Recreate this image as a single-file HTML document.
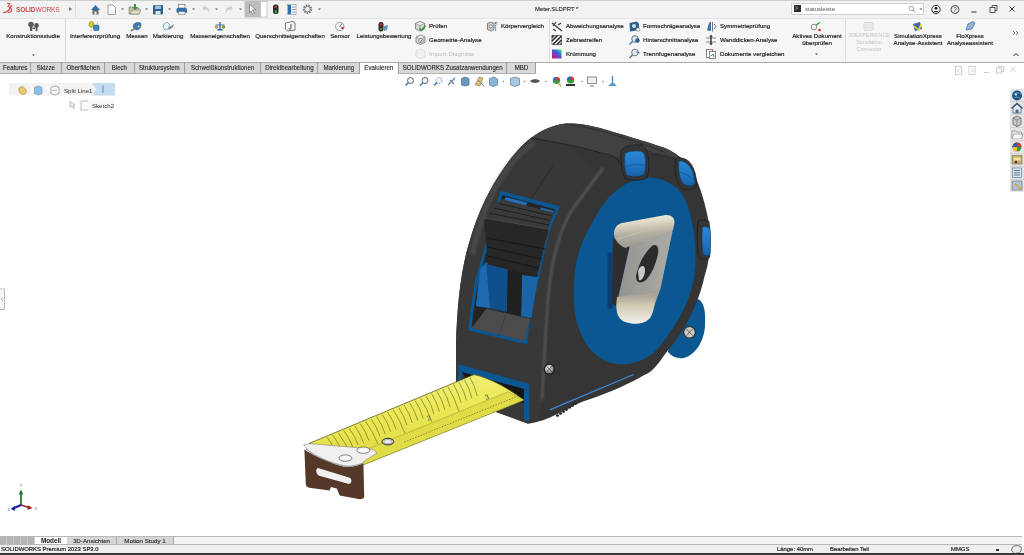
<!DOCTYPE html>
<html><head><meta charset="utf-8">
<style>
*{margin:0;padding:0;box-sizing:border-box}
html,body{width:1024px;height:555px;overflow:hidden;background:#fff;font-family:"Liberation Sans",sans-serif;color:#222}
.a{position:absolute;white-space:nowrap}
.t{position:absolute;white-space:nowrap;font-size:6.15px;line-height:7.2px;color:#161616;-webkit-text-stroke:0.16px #161616;will-change:transform}
#title{left:0;top:0;width:1024px;height:19px;background:#f2f2f2;border-top:1px solid #cfcfcf;border-bottom:1px solid #d8d8d8}
#ribbon{left:0;top:18px;width:1024px;height:44px;background:#f6f6f6;border-top:1px solid #e4e4e4}
#tabs{left:0;top:62px;width:1024px;height:12px;background:#fff;border-top:1px solid #a9a9a9}
.tab{position:absolute;top:0;height:11px;background:#d9d9d9;border-right:1px solid #9f9f9f;border-bottom:1px solid #b0b0b0;font-size:6.7px;line-height:10.5px;text-align:center;color:#1a1a1a;-webkit-text-stroke:0.1px #1a1a1a;will-change:transform}
.tab{display:flex;justify-content:center;white-space:nowrap}
.tab span{display:block;transform:scaleX(0.915);white-space:nowrap;flex:none}
.sep{position:absolute;width:1px;background:#dadada}
.dd{position:absolute;width:0;height:0;border-left:2px solid transparent;border-right:2px solid transparent;border-top:2px solid #444}
</style></head><body>

<!-- TITLE BAR -->
<div id="title" class="a"></div>
<div class="a" style="left:75px;top:1px;width:1px;height:17px;background:#e0e0e0"></div>
<!-- logo -->
<div class="a" style="left:16px;top:5.5px;font-size:6.6px;line-height:8px;color:#cc4a4c;letter-spacing:-0.15px;will-change:transform"><b>SOLID</b>WORKS</div>
<div class="a" style="left:69px;top:7px;width:0;height:0;border-top:2.5px solid transparent;border-bottom:2.5px solid transparent;border-left:3px solid #777"></div>

<div class="t" style="left:535px;top:5.5px;font-size:5.9px;-webkit-text-stroke:0.1px #222;color:#222">Meter.SLDPRT *</div>

<!-- search -->
<div class="a" style="left:791px;top:3px;width:133px;height:12px;background:#fff;border:1px solid #d0d0d0"></div>
<div class="a" style="left:794px;top:5px;width:7px;height:7px;background:#2b2b2b"></div>
<div class="t" style="left:805px;top:5.5px;font-size:6px;color:#555;-webkit-text-stroke:0">statusleiste</div>

<!-- RIBBON -->
<div id="ribbon" class="a"></div>
<div class="sep" style="left:65px;top:19px;height:42px"></div>
<div class="sep" style="left:549px;top:19px;height:42px"></div>
<div class="sep" style="left:845px;top:19px;height:42px"></div>

<div class="t" style="left:-16.60px;top:32px;width:100px;text-align:center">Konstruktionsstudie</div>
<div class="t" style="left:44.90px;top:32px;width:100px;text-align:center">Interferenzprüfung</div>
<div class="t" style="left:86.90px;top:32px;width:100px;text-align:center">Messen</div>
<div class="t" style="left:118.40px;top:32px;width:100px;text-align:center">Markierung</div>
<div class="t" style="left:169.75px;top:32px;width:100px;text-align:center">Masseneigenschaften</div>
<div class="t" style="left:240.40px;top:32px;width:100px;text-align:center">Querschnitteigenschaften</div>
<div class="t" style="left:290.30px;top:32px;width:100px;text-align:center">Sensor</div>
<div class="t" style="left:333.60px;top:32px;width:100px;text-align:center">Leistungsbewertung</div>

<div class="t" style="left:429px;top:22.3px">Prüfen</div>
<div class="t" style="left:429px;top:35.9px">Geometrie-Analyse</div>
<div class="t" style="left:429px;top:50.2px;color:#c6c6c6;-webkit-text-stroke:0.1px #c6c6c6">Import-Diagnose</div>
<div class="t" style="left:501px;top:22.3px">Körpervergleich</div>

<div class="t" style="left:566px;top:22.3px">Abweichungsanalyse</div>
<div class="t" style="left:566px;top:35.9px">Zebrastreifen</div>
<div class="t" style="left:566px;top:50.2px">Krümmung</div>
<div class="t" style="left:643px;top:22.3px">Formschrägeanalyse</div>
<div class="t" style="left:643px;top:35.9px">Hinterschnittanalyse</div>
<div class="t" style="left:643px;top:50.2px">Trennfugenanalyse</div>
<div class="t" style="left:720px;top:22.3px">Symmetrieprüfung</div>
<div class="t" style="left:720px;top:35.9px">Wanddicken-Analyse</div>
<div class="t" style="left:720px;top:50.2px">Dokumente vergleichen</div>

<div class="t" style="left:777.4px;top:32px;width:80px;text-align:center">Aktives Dokument<br>überprüfen</div>
<div class="t" style="left:828.5px;top:32px;width:80px;text-align:center;color:#c4c4c4;-webkit-text-stroke:0;font-size:5.45px;line-height:7.2px">3DEXPERIENCE<br>Simulation<br>Connector</div>
<div class="t" style="left:877.7px;top:32px;width:80px;text-align:center">SimulationXpress<br>Analyse-Assistent</div>
<div class="t" style="left:929.5px;top:32px;width:80px;text-align:center">FloXpress<br>Analyseassistent</div>

<!-- TABS -->
<div id="tabs" class="a"></div>
<div class="tab" style="left:0px;top:63px;width:31px"><span>Features</span></div>
<div class="tab" style="left:31px;top:63px;width:31px"><span>Skizze</span></div>
<div class="tab" style="left:62px;top:63px;width:43px"><span>Oberflächen</span></div>
<div class="tab" style="left:105px;top:63px;width:30px"><span>Blech</span></div>
<div class="tab" style="left:135px;top:63px;width:50px"><span>Struktursystem</span></div>
<div class="tab" style="left:185px;top:63px;width:76px"><span>Schweißkonstruktionen</span></div>
<div class="tab" style="left:261px;top:63px;width:57px"><span>Direktbearbeitung</span></div>
<div class="tab" style="left:318px;top:63px;width:42px"><span>Markierung</span></div>
<div class="tab" style="left:360px;top:63px;width:39px;background:#fff;border-bottom:none"><span>Evaluieren</span></div>
<div class="tab" style="left:399px;top:63px;width:108px"><span>SOLIDWORKS Zusatzanwendungen</span></div>
<div class="tab" style="left:507px;top:63px;width:29px"><span>MBD</span></div>


<!-- CHROME ICONS -->
<svg class="a" style="left:0;top:0" width="1024" height="320" viewBox="0 0 1024 320">
<!-- logo -->
<g fill="none" stroke="#cf4d4d" stroke-width="1.1" stroke-linejoin="round">
<path d="M7,3.5 L10,3.5 L8,6.5 C10,6.5 10.5,8.5 9,10 C7.5,11.5 5,12.5 3,12.8"/>
<path d="M12.5,6 C11,5.5 9.8,6.5 10.6,8 C11.4,9.5 12.5,10 11,11.5 C10,12.3 8.5,12.3 8,12"/>
</g>
<!-- title bar dropdown dots -->
<g fill="#555">
<path d="M121,8.5 h3 l-1.5,1.5z M145,8.5 h3 l-1.5,1.5z M168,8.5 h3 l-1.5,1.5z M192,8.5 h3 l-1.5,1.5z M215,8.5 h3 l-1.5,1.5z M239,8.5 h3 l-1.5,1.5z M262,8.5 h3 l-1.5,1.5z M318,8.5 h3 l-1.5,1.5z M919.5,8.5 h3 l-1.5,1.5z"/>
</g>
<!-- home -->
<path d="M91,10 L95.5,5 L100,10 Z" fill="#2f6fa8"/>
<rect x="92.5" y="10" width="6" height="4.5" fill="#6a6a6a"/>
<rect x="94.5" y="11.5" width="2" height="3" fill="#eee"/>
<!-- new doc -->
<path d="M108,5 L113,5 L115.5,7.5 L115.5,14.5 L108,14.5 Z" fill="#fafafa" stroke="#8a8a8a" stroke-width="0.8"/>
<!-- open -->
<path d="M129,7 L133,7 L134,8 L139,8 L139,14 L129,14 Z" fill="#c8c0a0" stroke="#777" stroke-width="0.6"/>
<path d="M130,14 L132,10 L141,10 L139,14 Z" fill="#e2dcc0" stroke="#777" stroke-width="0.6"/>
<path d="M134,4 L136,4 L136,7 L138,7 L135,10 L132,7 L134,7 Z" fill="#2a9a3a"/>
<!-- save -->
<rect x="153" y="5" width="10" height="9.5" rx="1" fill="#2b5f8e"/>
<rect x="155" y="5.5" width="6" height="3.5" fill="#9fc0dc"/>
<rect x="155.5" y="11" width="5" height="3.5" fill="#dfe8f0"/>
<!-- print -->
<rect x="178.5" y="4.5" width="6.5" height="3.5" fill="#fff" stroke="#555" stroke-width="0.6"/>
<rect x="176.5" y="8" width="10.5" height="5" rx="1.5" fill="#2f6fa8"/>
<rect x="178.5" y="11.5" width="6.5" height="3" fill="#eaeaea" stroke="#666" stroke-width="0.5"/>
<!-- undo redo -->
<path d="M202,8 L205,5.5 L205,7 C208,7 210,9 209,13 C208,10 207,9.5 205,9.5 L205,11 Z" fill="#cfcfcf"/>
<path d="M233,8 L230,5.5 L230,7 C227,7 225,9 226,13 C227,10 228,9.5 230,9.5 L230,11 Z" fill="#cfcfcf"/>
<!-- select -->
<rect x="244.5" y="1" width="16" height="16.5" fill="#bdbdbd"/>
<rect x="260.5" y="1.5" width="6.5" height="15.5" fill="#fff" stroke="#bdbdbd" stroke-width="0.8"/>
<path d="M249.5,4.5 L255.5,9.5 L252.5,10 L254.5,13.5 L252.5,14 L251,11 L249.5,13 Z" fill="#f4f4f4" stroke="#666" stroke-width="0.6"/>
<!-- traffic light -->
<rect x="273" y="4.5" width="5.5" height="9.5" rx="2.5" fill="#2a2a2a"/>
<circle cx="275.8" cy="7" r="1.2" fill="#d33"/>
<circle cx="275.8" cy="11.5" r="1.2" fill="#3c3"/>
<!-- list -->
<rect x="287.5" y="4.5" width="8.5" height="10" fill="#fff" stroke="#7a8a9a" stroke-width="0.6"/>
<rect x="288" y="5" width="3" height="9" fill="#2f6fa8"/>
<path d="M291.5,7 h4 M291.5,9.5 h4 M291.5,12 h4" stroke="#5b7ea8" stroke-width="0.8"/>
<!-- gear -->
<circle cx="307.5" cy="9.2" r="3.8" fill="none" stroke="#777" stroke-width="1.8" stroke-dasharray="1.6,1"/>
<circle cx="307.5" cy="9.2" r="2.8" fill="none" stroke="#777" stroke-width="0.9"/>
<!-- search etc -->
<circle cx="911.5" cy="8.5" r="2.3" fill="none" stroke="#8a8a8a" stroke-width="0.8"/>
<path d="M913,10 L915,12" stroke="#8a8a8a" stroke-width="0.9"/>
<path d="M795.5,6.5 L797.5,8 L795.5,9.5" stroke="#fff" stroke-width="0.6" fill="none"/>
<circle cx="936" cy="9.5" r="4.2" fill="#fff" stroke="#2a2a2a" stroke-width="1"/>
<circle cx="936" cy="8.2" r="1.5" fill="#2a2a2a"/>
<path d="M933,12.3 C934,10.5 938,10.5 939,12.3 Z" fill="#2a2a2a"/>
<circle cx="955" cy="9.5" r="4" fill="none" stroke="#333" stroke-width="0.9"/>
<text x="953.2" y="12" font-family="Liberation Sans" font-size="6.5" fill="#333">?</text>
<path d="M971.5,12 h5" stroke="#333" stroke-width="1"/>
<rect x="990" y="7.5" width="5" height="5" fill="none" stroke="#333" stroke-width="0.8"/>
<path d="M992,7.5 v-2 h5 v5 h-2" fill="none" stroke="#333" stroke-width="0.8"/>
<path d="M1009.5,6.5 L1014.5,11.5 M1014.5,6.5 L1009.5,11.5" stroke="#333" stroke-width="1"/>

<!-- RIBBON large icons -->
<!-- Konstruktionsstudie -->
<g fill="#5a5a5a">
<circle cx="31" cy="24.5" r="2.8"/><rect x="30" y="26" width="2.2" height="5"/>
<circle cx="36.5" cy="25.5" r="2.4"/><rect x="35.6" y="27" width="1.9" height="4"/>
<rect x="32.5" y="27.5" width="2.5" height="1.5"/>
</g>
<!-- Interferenz -->
<ellipse cx="91.5" cy="24.5" rx="2.6" ry="3" fill="#c8c83a" stroke="#8a8a20" stroke-width="0.5"/>
<rect x="93.5" y="25" width="5.5" height="5.5" rx="1" fill="#3c86b8" stroke="#2a5a80" stroke-width="0.5"/>
<circle cx="97.5" cy="23" r="0.6" fill="#e55"/><circle cx="91" cy="30" r="0.6" fill="#e55"/>
<!-- Messen -->
<path d="M133,25 C134,22 139,21 141,23 C142,25 141,29 138,30 C135,31 132,28 133,25 Z" fill="#3f79a8"/>
<circle cx="138.5" cy="26.5" r="1" fill="#e8d84a"/>
<path d="M131,31 L134,29" stroke="#7a5a30" stroke-width="1.5"/>
<!-- Markierung -->
<path d="M164,24 L167,22 L170,25 L168,29 L165,30 L163,27 Z" fill="#eef6fb" stroke="#5aa0d0" stroke-width="0.8"/>
<path d="M168,28 L174,24 L173,27 L169,30 Z" fill="#8a8a8a"/>
<!-- Masseneigenschaften -->
<path d="M220,22 v8" stroke="#2f6aa0" stroke-width="1.3"/>
<path d="M215.5,25 h9" stroke="#2f6aa0" stroke-width="0.9"/>
<path d="M217,30.5 h6 l-1,-1.5 h-4 z" fill="#2f6aa0"/>
<circle cx="216.5" cy="27" r="1.8" fill="#b0a070"/>
<circle cx="223.5" cy="27" r="1.8" fill="#a09020"/>
<!-- Querschnitt -->
<path d="M285.5,23 L293,21.5 L295,23 L295,30 L287.5,31 L285.5,29 Z" fill="#f8f8f8" stroke="#555" stroke-width="0.8"/>
<path d="M291,24 v4 c0,1.5 -2,1.5 -2.5,0.5" stroke="#333" stroke-width="0.9" fill="none"/>
<!-- Sensor -->
<circle cx="339.8" cy="26.5" r="4.2" fill="#f4f4f4" stroke="#9a9a9a" stroke-width="1"/>
<path d="M339.5,27 L342,23.5" stroke="#3a7ab8" stroke-width="1"/>
<circle cx="342.5" cy="28" r="1.3" fill="#c33"/>
<!-- Leistungsbewertung -->
<rect x="378.5" y="22" width="5" height="9.5" rx="2.3" fill="#3a2a2a"/>
<circle cx="381" cy="24.5" r="1.2" fill="#c33"/><circle cx="381" cy="29" r="1" fill="#3b3"/>
<path d="M384,26 L388,25 L387,30 L384,31 Z" fill="#3f7ab0" opacity="0.8"/>

<!-- small icons col1 -->
<path d="M415.5,23.5 L420,21.5 L424.5,23.5 L424.5,29 L420,31 L415.5,29 Z" fill="#d8d8d8" stroke="#6a6a6a" stroke-width="0.7"/>
<path d="M415.5,23.5 L420,25.5 L424.5,23.5 L420,21.5 Z" fill="#f4f4f4" stroke="#6a6a6a" stroke-width="0.5"/>
<path d="M420,25.5 V31" stroke="#6a6a6a" stroke-width="0.5"/>
<path d="M419.5,28.5 L421.5,30.5 L425.5,25.5" stroke="#2a9a2a" stroke-width="1.5" fill="none"/>
<path d="M416,37 L420.5,35 L425,37 L425,42.5 L420.5,44.5 L416,42.5 Z" fill="#dcdcdc" stroke="#6a6a6a" stroke-width="0.7"/>
<path d="M416,37 L420.5,39 L425,37 L420.5,35 Z" fill="#f4f4f4" stroke="#6a6a6a" stroke-width="0.5"/>
<circle cx="421" cy="40.5" r="2.3" fill="#fff" stroke="#555" stroke-width="0.6"/>
<path d="M419.8,40.5 L420.8,41.5 L422.5,39.5" stroke="#333" stroke-width="0.8" fill="none"/>
<path d="M416,51 L420.5,49 L425,51 L425,56.5 L420.5,58.5 L416,56.5 Z" fill="#f0f0f0" stroke="#d6d6d6" stroke-width="0.8"/>
<!-- Körpervergleich -->
<path d="M487.5,23.5 L491,22 L494,23.5 L494,29.5 L491,31 L487.5,29.5 Z" fill="#cfcfcf" stroke="#555" stroke-width="0.7"/>
<circle cx="490.8" cy="26.5" r="1.5" fill="#fff" stroke="#444" stroke-width="0.6"/>
<path d="M495.5,22.5 v9" stroke="#3a8ad0" stroke-width="1.2" stroke-dasharray="1.5,0.8"/>
<path d="M494,23 L497,22 L497,25" stroke="#777" stroke-width="0.6" fill="none"/>
<!-- Abweichung -->
<path d="M552,23 L562,31 M556,22 L553,26 M558,25 L561,23 M553,29 L556,31" stroke="#3a3a3a" stroke-width="1.2"/>
<!-- Zebra -->
<rect x="552" y="35.5" width="9.5" height="9" fill="#fff" stroke="#333" stroke-width="0.6"/>
<path d="M552,37.5 L554,35.5 M552,41 L557.5,35.5 M553,44.5 L561.5,36 M557,44.5 L561.5,40 M560.5,44.5 L561.5,43.5" stroke="#2a2a2a" stroke-width="1.6"/>
<!-- Krümmung -->
<defs><linearGradient id="rb" x1="0" y1="1" x2="1" y2="0"><stop offset="0" stop-color="#c02030"/><stop offset="0.35" stop-color="#9030c0"/><stop offset="0.6" stop-color="#3060e0"/><stop offset="0.85" stop-color="#30c0a0"/><stop offset="1" stop-color="#60e040"/></linearGradient></defs>
<rect x="552" y="49.5" width="9.5" height="9" fill="url(#rb)"/>
<!-- Formschräge -->
<path d="M629.5,23 L637,21.5 L639,24 L639,30 L630,31.5 Z" fill="#2f5f88"/>
<circle cx="634" cy="26" r="2" fill="#cfe0ee"/>
<circle cx="638" cy="29.5" r="1.8" fill="#fff" stroke="#555" stroke-width="0.5"/>
<!-- Hinterschnitt -->
<circle cx="635" cy="39" r="3.3" fill="#d6e6f0" stroke="#555" stroke-width="0.8"/>
<circle cx="637.5" cy="40.5" r="2.2" fill="#2f5f88"/>
<path d="M632.5,41.5 L629.5,44.5" stroke="#3a7ab8" stroke-width="1.4"/>
<!-- Trennfugen -->
<circle cx="635" cy="52.5" r="3.3" fill="#e6eef4" stroke="#555" stroke-width="0.8"/>
<path d="M632.5,55 L629.5,58" stroke="#3a7ab8" stroke-width="1.4"/>
<path d="M636,52 L640,53" stroke="#3a7ab8" stroke-width="0.8"/>
<!-- Symmetrie -->
<path d="M707,30.5 L709,23 L711,21.5 L711,31 Z" fill="#2f72b8"/>
<path d="M712.5,22 v9.5" stroke="#555" stroke-width="0.8"/>
<path d="M714,24 L716,26.5 L714,29" stroke="#555" stroke-width="0.8" fill="none"/>
<!-- Wanddicken -->
<path d="M706,38 h10 M706,42 h10" stroke="#888" stroke-width="1.2"/>
<path d="M711,35 v10" stroke="#333" stroke-width="1.4"/>
<path d="M709.5,37 L711,35.5 L712.5,37 M709.5,43 L711,44.5 L712.5,43" stroke="#333" stroke-width="0.8" fill="none"/>
<!-- Dokumente -->
<rect x="706.5" y="49.5" width="6" height="8" fill="#fff" stroke="#555" stroke-width="0.7"/>
<rect x="709.5" y="51.5" width="6" height="7" fill="#fff" stroke="#555" stroke-width="0.7"/>
<path d="M711,56 L713,54 L714,57" stroke="#2f72b8" stroke-width="1" fill="none"/>
<!-- Aktives Dokument -->
<circle cx="814" cy="27" r="2.8" fill="none" stroke="#888" stroke-width="1"/>
<path d="M816,25 L820,22.5" stroke="#3a9a3a" stroke-width="1.2"/>
<circle cx="819.5" cy="30" r="1.3" fill="#d22"/>
<!-- 3DEXPERIENCE -->
<rect x="864" y="22.5" width="9" height="8" rx="1" fill="#f0f0f0" stroke="#d0d0d0" stroke-width="0.8"/>
<path d="M865,25 h7 M865,27.5 h7" stroke="#d8d8d8" stroke-width="0.8"/>
<!-- SimulationXpress -->
<path d="M913,24 L920,22 L922,29 L915,31 Z" fill="#3a6ab0"/>
<path d="M914,26 L919,30 L921,24" stroke="#e8d020" stroke-width="1.6" fill="none"/>
<!-- FloXpress -->
<path d="M966,30 L968,24 L973,21.5 L975,23 L972,29 Z" fill="#8ab8e0" stroke="#3a78b8" stroke-width="0.8"/>
<path d="M969,27 L973,24" stroke="#e0a020" stroke-width="0.9"/>
<!-- ribbon chevrons -->
<path d="M1013,31 L1015,33 L1013,35 M1016,31 L1018,33 L1016,35" stroke="#555" stroke-width="0.8" fill="none"/>
<path d="M1013.5,56 L1016,53.5 L1018.5,56" stroke="#333" stroke-width="1" fill="none"/>
<path d="M815,53.5 h3 l-1.5,1.5z M32,54.5 h3 l-1.5,1.5z" fill="#444"/>

<!-- window controls in graphics -->
<g stroke="#c0c0c0" stroke-width="0.8" fill="none">
<rect x="955.5" y="66.5" width="6" height="8"/><path d="M959,68.5 L957.5,70.5 L959,72.5"/>
<rect x="969" y="66.5" width="6" height="8"/><path d="M971.5,68.5 L973,70.5 L971.5,72.5"/>
<path d="M984,72.5 h5"/>
<rect x="996.5" y="68" width="5" height="5"/><path d="M998.5,68 v-1.5 h5 v5 h-2"/>
<path d="M1010.5,67 L1015.5,72 M1015.5,67 L1010.5,72"/>
</g>

<!-- view toolbar -->
<g>
<circle cx="410.5" cy="80.5" r="3" fill="#eef4f8" stroke="#555" stroke-width="0.9"/><path d="M408.5,82.5 L405.5,85.5" stroke="#3a7ab8" stroke-width="1.6"/>
<circle cx="425" cy="80.5" r="3" fill="#eef4f8" stroke="#555" stroke-width="0.9"/><path d="M423,82.5 L420,85.5" stroke="#3a7ab8" stroke-width="1.6"/>
<circle cx="439" cy="80.5" r="3" fill="#f4f8fb" stroke="#6a8aa8" stroke-width="0.9" stroke-dasharray="1.2,0.6"/><path d="M437,82.5 L434,85.5" stroke="#3a7ab8" stroke-width="1.6"/>
<path d="M448,85 L455,78 M450,80 L454,84" stroke="#6a8098" stroke-width="1.2"/>
<path d="M461.5,78.5 L465,77 L469,78.5 L469,85 L465,86 L461.5,85 Z" fill="#6a98c0" stroke="#3a5a78" stroke-width="0.6"/>
<path d="M475,85 L479,77 L483,78 L480,86 Z" fill="#e0c060" stroke="#777" stroke-width="0.6"/><path d="M478,80 L484,86" stroke="#6a8098" stroke-width="1"/>
<path d="M489.5,78.5 L494,77 L497.5,79 L497.5,85 L493,86.5 L489.5,85 Z" fill="#8ab4d8" stroke="#4a6a88" stroke-width="0.6"/>
<path d="M510.5,78.5 L515,77 L519.5,78.5 L519.5,85 L515,86.5 L510.5,85 Z" fill="#a8c8e4" stroke="#4a6a88" stroke-width="0.6"/>
<path d="M530,81 C532,78.5 538,78.5 540,81 C538,83.5 532,83.5 530,81 Z" fill="#555"/>
<circle cx="556.5" cy="80.5" r="3.6" fill="#3a9a3a"/><path d="M556.5,76.9 A3.6,3.6 0 0,1 560.1,80.5 L556.5,80.5 Z" fill="#d33"/><path d="M552.9,80.5 A3.6,3.6 0 0,1 556.5,76.9 L556.5,80.5 Z" fill="#2f6ab8"/><path d="M558,83 L561,86" stroke="#c0a050" stroke-width="1.2"/>
<circle cx="570.5" cy="80" r="3.6" fill="#3a9a3a"/><path d="M570.5,76.4 A3.6,3.6 0 0,1 574.1,80 L570.5,80 Z" fill="#d33"/><path d="M566.9,80 A3.6,3.6 0 0,1 570.5,76.4 L570.5,80 Z" fill="#2f6ab8"/><rect x="566" y="84" width="9" height="2" fill="#333"/>
<rect x="587.5" y="77" width="9" height="6.5" fill="#f0f0f0" stroke="#777" stroke-width="0.8"/><path d="M590,86 h4" stroke="#777" stroke-width="1"/>
<path d="M612.5,76 v7" stroke="#3a7ab8" stroke-width="1.2"/><path d="M608,86 L617,86 L614,83 L611,83 Z" fill="#5a9ad0"/>
<g fill="#777"><circle cx="503.5" cy="81.5" r="0.7"/><circle cx="524.7" cy="81.5" r="0.7"/><circle cx="546" cy="81.5" r="0.7"/><circle cx="582" cy="81.5" r="0.7"/><circle cx="603" cy="81.5" r="0.7"/></g>
</g>

<!-- breadcrumb -->
<rect x="9" y="83" width="106" height="12.5" fill="#f3f3f3"/>
<path d="M92,83 L115,83 L115,95.5 L92,95.5 L96,89.25 Z" fill="#c6dcef"/>
<path d="M29,83 L33,89.25 L29,95.5 M45,83 L49,89.25 L45,95.5" stroke="#fff" stroke-width="1.2" fill="none"/>
<g transform="translate(0,1.5)"><path d="M19,86.5 C20,84.5 24,85 25,87 C27,88 27,92 24,93 C21,93.5 18,91 19,86.5 Z" fill="#e6c870" stroke="#b08a30" stroke-width="0.6"/>
<path d="M34.5,86 L38,84.5 L42,86 L42,92 L38,93.5 L34.5,92 Z" fill="#8ec0e6" stroke="#5a90c0" stroke-width="0.6"/>
<path d="M51,86 L55,84.5 L59,86 L59,92 L55,93.5 L51,92 Z" fill="#fafafa" stroke="#777" stroke-width="0.6"/>
<path d="M52.5,89 L57,88.5" stroke="#5a90c0" stroke-width="0.7"/>
</g>
<path d="M103,85.5 v7.5" stroke="#5a8ab8" stroke-width="1"/>
<rect x="78.7" y="99.5" width="36.3" height="11.5" fill="#f8f8f8"/>
<path d="M81,101 h7 M81,101 v9 h7" stroke="#aaa" stroke-width="0.7" fill="none"/>
<path d="M70,101.5 L70,107 L72,106 L73.5,108.5 L74.5,108 L73,105.5 L75,105 Z" fill="#f4f4f4" stroke="#999" stroke-width="0.6"/>

<!-- task pane right -->
<rect x="1010" y="89" width="14" height="103" fill="#e4e4e4"/>
<g stroke="#c8c8c8" stroke-width="0.6"><path d="M1010,101.5 h14 M1010,114.5 h14 M1010,127.5 h14 M1010,140.5 h14 M1010,153.5 h14 M1010,166.5 h14 M1010,179.5 h14"/></g>
<circle cx="1017" cy="95.5" r="5" fill="#1a4f8a"/><path d="M1013,95 C1015,92 1019,92 1021,94.5 M1014,98 C1016,96.5 1019,97 1020,98.5" stroke="#8ab8e8" stroke-width="0.7" fill="none"/><circle cx="1016" cy="94.5" r="1.2" fill="#cfe4f8"/>
<path d="M1011.5,108.5 L1017,103.5 L1022.5,108.5" stroke="#2a4a6a" stroke-width="1.4" fill="none"/><path d="M1013,108 L1013,113 L1021,113 L1021,108" fill="#e8eef4" stroke="#4a6a8a" stroke-width="0.9"/><rect x="1015.5" y="109.5" width="3" height="3.5" fill="#4a6a8a"/>
<path d="M1013,118 L1017,116 L1021,118 L1021,124.5 L1017,126.5 L1013,124.5 Z" fill="#c8c8c8" stroke="#666" stroke-width="0.8"/><path d="M1013,118 L1017,120 L1021,118 M1017,120 V126.5" stroke="#666" stroke-width="0.6" fill="none"/>
<path d="M1012,131 L1015.5,131 L1016.5,132 L1021.5,132 L1021.5,138.5 L1012,138.5 Z" fill="#f0f0f0" stroke="#888" stroke-width="0.8"/><path d="M1012,138.5 L1014,134 L1023,134 L1021.5,138.5" fill="#fafafa" stroke="#888" stroke-width="0.7"/>
<circle cx="1017" cy="147" r="4.5" fill="#3a9a3a"/><path d="M1017,142.5 A4.5,4.5 0 0,1 1021.5,147 L1017,147 Z" fill="#d33"/><path d="M1012.5,147 A4.5,4.5 0 0,1 1017,142.5 L1017,147 Z" fill="#2f5ab0"/><path d="M1017,147 L1017,151.5 A4.5,4.5 0 0,1 1012.5,147 Z" fill="#e8c020"/>
<rect x="1012" y="155.5" width="10" height="8.5" fill="#c8b060" stroke="#666" stroke-width="0.6"/><rect x="1013.5" y="157.5" width="7" height="3" fill="#f0e0a0"/><circle cx="1016" cy="162" r="1.3" fill="#3a3a3a"/>
<rect x="1012.5" y="168" width="9" height="9.5" fill="#dde6ee" stroke="#5a7a9a" stroke-width="0.7"/><path d="M1014,170.5 h6 M1014,172.8 h6 M1014,175 h6" stroke="#4a6a8a" stroke-width="0.9"/>
<rect x="1012" y="181" width="10" height="9" fill="#b0c4d6" stroke="#667" stroke-width="0.6"/><path d="M1015,184 L1021,189" stroke="#d8a020" stroke-width="1.6"/>

<!-- left edge handle -->
<rect x="-1" y="289" width="5.5" height="20.5" fill="#f8f8f8" stroke="#aaa" stroke-width="0.8"/>
<path d="M3,297 L1,299 L3,301" stroke="#999" stroke-width="0.7" fill="none"/>
</svg>

<!-- triad -->
<svg class="a" style="left:0;top:470px" width="60" height="50" viewBox="0 470 60 50">
<path d="M21,505 v-12" stroke="#2a7a2a" stroke-width="1.8"/><path d="M18.8,494.5 L21,489.5 L23.2,494.5 Z" fill="#2a6a2a"/>
<path d="M21,505 L29,507.5" stroke="#a02525" stroke-width="1.8"/><path d="M28,505.3 L32.5,508 L27.5,510 Z" fill="#9a2020"/>
<path d="M21,505 L13,508.5" stroke="#1a22a8" stroke-width="2.4"/><path d="M14.5,506 L10.8,509 L15,511 Z" fill="#1a22a0"/>
<text x="19.6" y="486.5" font-family="Liberation Sans" font-size="3.6" fill="#3a6a3a">Y</text>
<text x="34.5" y="509.8" font-family="Liberation Sans" font-size="3.6" fill="#b03030">X</text>
<text x="7.5" y="510.8" font-family="Liberation Sans" font-size="3.6" fill="#2a3ab0">Z</text>
</svg>

<div class="t" style="left:63.5px;top:86.8px;font-size:6.1px;-webkit-text-stroke:0;color:#333">Split Line1</div>
<div class="t" style="left:92px;top:101.5px;font-size:6.1px;-webkit-text-stroke:0;color:#333">Sketch2</div>
<!-- TAPE MEASURE -->
<svg class="a" style="left:0;top:0" width="1024" height="555" viewBox="0 0 1024 555">
<defs>
<linearGradient id="gTape" x1="0" y1="0" x2="0.3" y2="1">
<stop offset="0" stop-color="#f2f088"/><stop offset="0.5" stop-color="#ebe958"/><stop offset="1" stop-color="#dcd83c"/>
</linearGradient>
<linearGradient id="gClip" x1="0" y1="0" x2="1" y2="0">
<stop offset="0" stop-color="#929290"/><stop offset="0.6" stop-color="#a2a19c"/><stop offset="1" stop-color="#acaba6"/>
</linearGradient>
<linearGradient id="gBar" x1="0" y1="0" x2="0.15" y2="1">
<stop offset="0" stop-color="#f2f0e8"/><stop offset="0.3" stop-color="#ddd8c6"/><stop offset="0.6" stop-color="#b4b0a2"/><stop offset="1" stop-color="#9c9a94"/>
</linearGradient>
<linearGradient id="gCurl" x1="0" y1="0" x2="0" y2="1">
<stop offset="0" stop-color="#9a9890"/><stop offset="0.4" stop-color="#cfc8b0"/><stop offset="1" stop-color="#f2f0ea"/>
</linearGradient>
<linearGradient id="gKnob" x1="0" y1="0" x2="0" y2="1">
<stop offset="0" stop-color="#2a86d6"/><stop offset="0.6" stop-color="#1f74c2"/><stop offset="1" stop-color="#1661a8"/>
</linearGradient>
<radialGradient id="gScrew" cx="0.4" cy="0.35" r="0.7">
<stop offset="0" stop-color="#f0f0f0"/><stop offset="0.6" stop-color="#a8a8a8"/><stop offset="1" stop-color="#6a6a6a"/>
</radialGradient>
<radialGradient id="gHi" cx="0.5" cy="0.5" r="0.5">
<stop offset="0" stop-color="#6a6a6a"/><stop offset="1" stop-color="#3a3a3a" stop-opacity="0"/>
</radialGradient>
<filter id="blur1" x="-20%" y="-20%" width="140%" height="140%"><feGaussianBlur stdDeviation="1.2"/></filter>
<filter id="blur05"><feGaussianBlur stdDeviation="0.5"/></filter>
</defs>
<!-- wheel behind -->
<path d="M668,352 C672,330 684,302 697,299 C704,300 706,312 705,326 C704,342 695,355 684,358 C678,359 672,357 668,352 Z" fill="#0a5792"/>
<!-- case silhouette -->
<path d="M456,382 L456,345 C457,305 461,268 470,240 C478,212 490,188 504,168 C515,152 525,142 531,138 C540,131 552,125 565.4,123.5 C575,123 585,124 600,128 C620,134 645,141 665,148 C680,154 690,165 696,178.6 C702,192 707,210 710,230 C711,250 708,266 704.6,276 C702,288 699,296 697,301 C692,314 684,330 672.4,344.9 C664,354 658,366 650,372 C645,375 642,376 640,377.5 C625,386 600,396 583,401.6 C570,407 560,413 551.5,416.8 C545,420 535,423 527.6,423.5 L496,412 L470,400 Z" fill="#353535"/>
<!-- front face slight lighter -->
<path d="M456,382 L456,345 C457,305 461,268 470,240 C478,212 490,188 504,168 C515,152 525,142 531,138 L560,142 C575,150 588,165 597,176.5 C585,190 570,213 559.6,236 C552,260 548.8,290 545.2,344 L541.6,400 L540,420 C535,422.5 531,423.3 527.6,423.5 L496,412 L470,400 Z" fill="#383838"/>
<!-- top face band -->
<path d="M531,138 C540,131 552,125 565.4,123.5 C575,123 585,124 600,128 C620,134 645,141 665,148 C672,151 678,155 682,160 L675,158 C660,154 645,150 640,147 L616,157.8 C600,152 570,145 531,138 Z" fill="#414141"/>
<path d="M531,138 C560,143 585,148 600,152.7 C608,154 613,156 616,158" stroke="#1c1c1c" stroke-width="0.8" fill="none"/>
<path d="M566,124.5 C585,126 600,131 621.6,137 C640,143 655,148 665,152.4" stroke="#262626" stroke-width="0.7" fill="none"/>
<path d="M616,158 C620,162 623,168 625,174" stroke="#1c1c1c" stroke-width="0.7" fill="none"/>
<path d="M641,143.8 C645,148 647,155 647.6,165.4 C648,172 648,176 647,180" stroke="#1c1c1c" stroke-width="0.7" fill="none"/>
<path d="M650,154 C660,155 668,157 675,158.4" stroke="#2a2a2a" stroke-width="0.6" fill="none"/>
<!-- rounded edge highlight -->
<path d="M603,168 C597,176.5 585,192 570,213 C560,232 552,258 549,290 C546,320 545,350 542,400" stroke="#5e5e5e" stroke-width="2.2" fill="none" filter="url(#blur1)" opacity="0.9"/>
<path d="M472,255 C476,235 483,212 494,190 C505,170 518,153 534,142" stroke="#4c4c4c" stroke-width="6" fill="none" filter="url(#blur1)" opacity="0.75"/>
<path d="M553.4,164.6 C545,178 538,188 530.7,199.2" stroke="#222" stroke-width="0.6" fill="none"/>
<!-- blue disc -->
<path d="M650,177.6 C662,178.5 671,183 678,189 C686,198 690,210 692.7,225.3 C695,238 696,250 695.5,262 C695,276 692,288 688.7,297.6 C685,308 680,318 673,328 C666,338 660,348 650,355.7 C640,362 628,365 618.6,364.3 C605,363 594,355 587,345 C580,334 576,322 574.5,310 C573,298 573.5,285 575,270 C577,255 582,240 591.6,224 C596,215 600,209 602.4,205.7 C607,199 611,195 615.4,191.6 C620,187 625,184 630.5,181.9 C636,179 643,177.5 650,177.6 Z" fill="#0a5792"/>
<!-- clip -->
<path d="M607.6,253 L612.6,252 L612.6,308 L607.6,309 Z" fill="#0b3f74"/>
<path d="M613,238 L630,245 L616,306 L612,304 Z" fill="#2e2e2e"/>
<path d="M630,245 L673,229 L660.6,288.3 L654.3,306 L616.4,306 Z" fill="url(#gClip)"/>
<path d="M613.9,234 C614,227 618,224 622,223 L665.6,215.1 C671,214.5 675,218 674.4,222.7 C674,227 673,229 673,230 L625.2,248 C620,246 614,240 613.9,234 Z" fill="url(#gBar)"/>
<path d="M617,239 L672,223" stroke="#c9c2a8" stroke-width="0.9"/>
<path d="M617,297 L656,292 L654.3,306 C653,313 651,318 648,320 C644,323 640,324 634,323.7 C627,323 622,322 619,317 C616,313 616,305 617,297 Z" fill="url(#gCurl)"/>
<path d="M618,302 L655,293" stroke="#b8b098" stroke-width="0.8"/>
<path d="M652,246 C657,243 659,248 658,254 C656,264 651,275 646,280 C641,284 636,283 636,277 C637,268 643,254 652,246 Z" fill="#2b2b2b"/>
<path d="M638,271 C640,265 645,264 645,270 C645,276 642,281 639,280 Z" fill="#c8c8c8"/>
<!-- knobs -->
<path d="M621,151 C624,146 632,144 641,145 C646,147 648,152 648.5,160 C649,168 648.5,175 646.5,178 C641,181 630,181 625,178.5 C622,173 620.5,160 621,151 Z" fill="#353535" stroke="#151515" stroke-width="0.6"/>
<path d="M625,153.5 C628,151 636,150.5 641.5,151.5 C645,153 645.6,158 645.5,165 C645.4,170 645,173 643.5,175 C638,177 630,176.5 626.5,175 C624.5,170 624.3,160 625,153.5 Z" fill="url(#gKnob)" stroke="#0d3a66" stroke-width="0.5"/>
<path d="M624.5,167 C631,164.5 639,164 645.5,165.5" stroke="#0f4a84" stroke-width="0.6" fill="none"/>
<path d="M676,158.5 C680,157 685,158 689,161.5 C694,167 697,176 696.5,186 C693,190 686,190.5 681.5,188.5 C677,184 675,174 675,166 C675,162 675.3,159.5 676,158.5 Z" fill="#353535" stroke="#151515" stroke-width="0.6"/>
<path d="M679,161 C682,160.5 686.5,162.5 689.5,166 C692.5,170 694.5,177 694.8,184 C692,186.5 687,186.5 684,184.5 C680.5,181 678.6,173 678.6,167 C678.6,164 678.7,162 679,161 Z" fill="url(#gKnob)" stroke="#0d3a66" stroke-width="0.5"/>
<path d="M679,172 C684,173 689.5,176 694,180" stroke="#0f4a84" stroke-width="0.6" fill="none"/>
<path d="M698,221 C701,219.5 706,219.5 709,221.5 C710.4,231 710.6,246 709.6,257.5 C706,260 700.5,259.5 698.5,257 C697,248 697,231 698,221 Z" fill="#353535" stroke="#151515" stroke-width="0.6"/>
<path d="M702.5,227 C705,226.5 708,227 710,228.5 C710.6,238 710.6,248 710,254.5 C707.5,256 704.5,255.8 703,254 C701.8,246 701.8,235 702.5,227 Z" fill="url(#gKnob)" stroke="#0d3a66" stroke-width="0.5"/>
<!-- wheel screw -->
<circle cx="689.5" cy="332.3" r="6.2" fill="#2a2a2a"/>
<circle cx="689.5" cy="332.3" r="5.2" fill="#cfcac0"/>
<path d="M686.5,329 L692.5,335.5 M692.5,329 L686.5,335.5" stroke="#444" stroke-width="0.8"/>
<!-- blue bottom line -->
<path d="M549.7,409.8 L633.6,374.5" stroke="#3d8ad6" stroke-width="1.3"/>
<ellipse cx="557.5" cy="415.5" rx="1.4" ry="1.2" fill="#1e1e1e" stroke="#555" stroke-width="0.3"/><ellipse cx="560.5" cy="413.5" rx="1.4" ry="1.2" fill="#1e1e1e" stroke="#555" stroke-width="0.3"/><ellipse cx="563.5" cy="411.5" rx="1.4" ry="1.2" fill="#1e1e1e" stroke="#555" stroke-width="0.3"/><ellipse cx="566.5" cy="409.5" rx="1.4" ry="1.2" fill="#1e1e1e" stroke="#555" stroke-width="0.3"/><ellipse cx="569.5" cy="407.5" rx="1.4" ry="1.2" fill="#1e1e1e" stroke="#555" stroke-width="0.3"/><ellipse cx="572.5" cy="405.5" rx="1.4" ry="1.2" fill="#1e1e1e" stroke="#555" stroke-width="0.3"/><ellipse cx="575.5" cy="403.5" rx="1.4" ry="1.2" fill="#1e1e1e" stroke="#555" stroke-width="0.3"/>
<!-- screw front -->
<circle cx="549.3" cy="369.1" r="5.7" fill="#1e1e1e"/>
<circle cx="549.3" cy="369.1" r="4.4" fill="url(#gScrew)"/>
<path d="M546.8,366.3 L551.8,371.9 M551.8,366.3 L546.8,371.9" stroke="#3a3a3a" stroke-width="0.8"/>
<!-- front window -->
<path d="M500.3,190.7 L560.2,206.5 C556,215 552,223 550,230 C546,243 543,258 540.2,273.2 C537,288 534,300 531.6,312 C529.5,322 528,333 527.3,344.4 L468.3,330.4 C470,315 472,298 475.3,280 L483.9,250 Z" fill="#0a5792"/>
<path d="M502.5,195 L555.5,209.5 C552,217 549,224 547,231 C543,244 540,259 537.3,273 C534.5,288 531.5,300 529,312 C527,322 525.5,332 524.8,340.5 L471.8,327.5 C473,313 475.5,297 478.5,281 L487,250 Z" fill="#242424"/>
<path d="M478.5,281 L486,262 L508,268 L507,312 L476,306 Z" fill="#0f4f8c"/>
<path d="M480,270 L486,262 L490,308 L476,306 Z" fill="#1d6ab0"/>
<path d="M521.9,275 L538,277 C536,290 533.5,303 531.5,318 L521,318 Z" fill="#1a64a8"/>
<path d="M508,268 L522,272 L521,320 L507,312 Z" fill="#202020"/>
<path d="M486.6,308.4 L530,318.5 C528,326 526,334 525,341 L471.5,328 Z" fill="#4b4b4b"/>
<path d="M486.6,308.4 L530,318.5" stroke="#2a2a2a" stroke-width="0.7"/>
<path d="M506,314 L499,336" stroke="#333" stroke-width="0.5"/>
<path d="M505.5,197 L527,202.5 L526,206.5 L504,201.5 Z" fill="#1f70bf"/>
<path d="M541,207.5 L554,211 L552,215.5 L539,212.5 Z" fill="#1f70bf"/>
<!-- lock button -->
<path d="M503,199.5 L553.5,212.5 L548,229 L485,218 C486,211 494,203 503,199.5 Z" fill="#3a3a3a"/>
<path d="M499,203.5 L552,216 M494,208 L550.5,220.5 M489,213 L549,225" stroke="#1e1e1e" stroke-width="1"/>
<path d="M485,218 L548,229 C549,232 547,236 545.7,240 L537,277 L488,264.5 L484.5,226 C484,222 484.5,220 485,218 Z" fill="#272727"/>
<path d="M485,218 L548,229" stroke="#4a4a4a" stroke-width="1"/>
<path d="M486,238 L545,249 M487,247 L542,259 M487.5,256 L539,268" stroke="#1a1a1a" stroke-width="1.2"/>
<!-- tape opening -->
<path d="M458.6,364.3 L529.2,383.8 L529.2,421 L524,420 L524,389 L462,373 L461,385 L458,384 Z" fill="#0a5792"/>
<path d="M462,372 L524,389 L524,403 L474,391 Z" fill="#151515"/>
<!-- tape -->
<path d="M309,443.5 L474,374.5 C490,378 508,388 524,400 L364,464.5 Z" fill="url(#gTape)" stroke="#4a4a10" stroke-width="0.7"/>
<path d="M346.4,457.8 L508.0,391.8 L524.0,400.0 L364.0,464.5 Z" fill="#e0dc48" stroke="#8a8630" stroke-width="0.4"/>
<path d="M327.1,437.2 Q333.3,445.1 336.5,454.0 M332.6,434.9 Q338.8,442.9 341.9,451.8 M338.1,432.7 Q346.0,443.4 350.9,455.1 M343.6,430.4 Q349.7,438.3 352.8,447.3 M349.1,428.1 Q355.1,436.1 358.2,445.1 M354.6,425.8 Q360.6,433.8 363.6,442.9 M360.1,423.5 Q366.1,431.6 369.0,440.6 M365.6,421.2 Q373.2,432.1 377.9,444.1 M371.1,418.9 Q377.0,427.0 379.8,436.2 M376.6,416.6 Q382.4,424.8 385.2,434.0 M382.1,414.3 Q387.9,422.5 390.7,431.8 M387.6,412.0 Q393.3,420.3 396.1,429.5 M393.1,409.7 Q400.4,420.9 404.8,433.1 M398.6,407.4 Q404.2,415.7 406.9,425.1 M404.1,405.1 Q409.7,413.5 412.3,422.9 M409.6,402.8 Q415.2,411.2 417.8,420.6 M415.1,400.5 Q420.6,409.0 423.2,418.4 M420.6,398.2 Q427.7,409.6 431.8,422.1 M426.0,395.9 Q431.5,404.4 434.0,414.0 M431.5,393.6 Q437.0,402.2 439.4,411.7 M437.0,391.3 Q442.4,399.9 444.8,409.5 M442.5,389.0 Q447.9,397.7 450.2,407.3 M448.0,386.7 Q454.9,398.4 458.7,411.1 M453.5,384.4 Q458.8,393.1 461.1,402.8 M459.0,382.2 Q464.3,390.9 466.5,400.6 M464.5,379.9 Q469.7,388.6 471.9,398.4 M470.0,377.6 Q475.2,386.4 477.3,396.1" stroke="#55541c" stroke-width="0.55" fill="none"/>
<path d="M404.5,442.0 l1.2,-0.5 M407.2,440.9 l1.2,-0.5 M409.9,439.9 l1.2,-0.5 M412.5,438.8 l1.2,-0.5 M415.2,437.7 l1.2,-0.5 M417.9,436.6 l1.2,-0.5 M420.6,435.5 l1.2,-0.5 M423.3,434.4 l1.2,-0.5 M425.9,433.3 l1.2,-0.5 M428.6,432.3 l1.2,-0.5 M431.3,431.2 l1.2,-0.5 M434.0,430.1 l1.2,-0.5 M436.6,429.0 l1.2,-0.5 M439.3,427.9 l1.2,-0.5 M442.0,426.8 l1.2,-0.5 M444.7,425.7 l1.2,-0.5 M447.4,424.7 l1.2,-0.5 M450.0,423.6 l1.2,-0.5 M452.7,422.5 l1.2,-0.5 M455.4,421.4 l1.2,-0.5 M458.1,420.3 l1.2,-0.5 M460.8,419.2 l1.2,-0.5 M463.4,418.1 l1.2,-0.5 M466.1,417.1 l1.2,-0.5 M468.8,416.0 l1.2,-0.5 M471.5,414.9 l1.2,-0.5 M474.1,413.8 l1.2,-0.5 M476.8,412.7 l1.2,-0.5 M479.5,411.6 l1.2,-0.5 M482.2,410.5 l1.2,-0.5 M484.9,409.5 l1.2,-0.5 M487.5,408.4 l1.2,-0.5 M490.2,407.3 l1.2,-0.5 M492.9,406.2 l1.2,-0.5 M495.6,405.1 l1.2,-0.5 M498.3,404.0 l1.2,-0.5 M500.9,402.9 l1.2,-0.5 M503.6,401.9 l1.2,-0.5 M506.3,400.8 l1.2,-0.5 M509.0,399.7 l1.2,-0.5 M511.6,398.6 l1.2,-0.5 M514.3,397.5 l1.2,-0.5" stroke="#55541a" stroke-width="0.7" fill="none"/>
<text x="428" y="421" font-family="Liberation Sans" font-size="7" fill="#555" transform="rotate(-22 428 421)">2</text>
<text x="486" y="400" font-family="Liberation Sans" font-size="7" fill="#555" transform="rotate(-22 486 400)">3</text>
<!-- hook -->
<path d="M304.4,449.5 L305.8,484 C306,486 307,487.5 309.4,487.7 L329.6,490.6 L331,487 L336.8,488.4 L339.7,495.6 L359.8,499.2 C362,499 364,498 364.2,497 L363.4,463.2 C357,466 350,467 345.4,466.8 C338,466 330,462 323.8,459.6 C315,456 308,452 304.4,449.5 Z" fill="#553827"/>
<path d="M318,468 L349,477.5 C352,478.5 352.5,483 349,484 L320,476 C316,475 315,469 318,468 Z" fill="#f0f0f0"/>
<path d="M303.6,444.5 L310.9,443.7 L352.6,447.3 L372.8,449.5 L377.1,453.1 L364.2,461 L362.7,463.2 C357,466 350,467 345.4,466.8 C338,466 330,462 323.8,459.6 C315,456 308,452 303.6,444.5 Z" fill="#f0f0f0" stroke="#777" stroke-width="0.5"/>
<path d="M306,449 C315,456 330,463 345,466 C352,467 358,465 363,463" stroke="#9a9a9a" stroke-width="1" fill="none"/>
<ellipse cx="345.4" cy="458.1" rx="6.5" ry="3.2" fill="#f6f6f6" stroke="#555" stroke-width="0.7"/>
<ellipse cx="363.4" cy="450.2" rx="6.5" ry="3.2" fill="#f6f6f6" stroke="#555" stroke-width="0.7"/>
<ellipse cx="387.9" cy="441.6" rx="6" ry="3.3" fill="#bbb" stroke="#333" stroke-width="1"/>
<ellipse cx="387.9" cy="441.6" rx="3" ry="1.5" fill="#eee"/>
</svg>
<!-- BOTTOM -->
<div class="a" style="left:0;top:536px;width:1022px;height:9px;background:#f3f3f3;border-top:1px solid #b8b8b8;border-bottom:1px solid #b8b8b8"></div>
<div class="a" style="left:0;top:537px;width:35px;height:7px;background:repeating-linear-gradient(90deg,#b4b4b4 0 6px,#c8c8c8 6px 7px)"></div>
<div class="a" style="left:35px;top:537px;width:32px;height:7px;background:#fff;font-size:6.3px;line-height:7.5px;text-align:center;font-weight:bold;color:#111;will-change:transform">Modell</div>
<div class="a" style="left:67px;top:537px;width:50px;height:7px;background:#d6d6d6;border-right:1px solid #aaa;font-size:6.2px;line-height:7.5px;text-align:center;color:#222;will-change:transform;-webkit-text-stroke:0.1px #222">3D-Ansichten</div>
<div class="a" style="left:117px;top:537px;width:57px;height:7px;background:#d6d6d6;border-right:1px solid #aaa;font-size:6.2px;line-height:7.5px;text-align:center;color:#222;will-change:transform;-webkit-text-stroke:0.1px #222">Motion Study 1</div>
<div class="a" style="left:0;top:545px;width:1024px;height:8px;background:#f0f0f0"></div>
<div class="t" style="left:1px;top:546px;font-size:5.9px">SOLIDWORKS Premium 2023 SP3.0</div>
<div class="t" style="left:777px;top:546px;font-size:5.9px">Länge: 40mm</div>
<div class="t" style="left:830px;top:546px;font-size:5.9px">Bearbeiten Teil</div>
<div class="t" style="left:951px;top:546px;font-size:5.9px">MMGS</div>
<div class="a" style="left:996px;top:549px;width:3px;height:2px;background:#333"></div>
<svg class="a" style="left:1010px;top:544px" width="14" height="11" viewBox="0 0 14 11"><path d="M2,4 C3,1 9,1 11,3 C12,5 11,8 9,9 L6,9 L5,11 L4,9 C2,8 1,6 2,4 Z" fill="#e8e8e8" stroke="#555" stroke-width="0.8"/></svg>
<div class="a" style="left:0;top:553px;width:1024px;height:2px;background:#3a3a3a"></div>

</body></html>
